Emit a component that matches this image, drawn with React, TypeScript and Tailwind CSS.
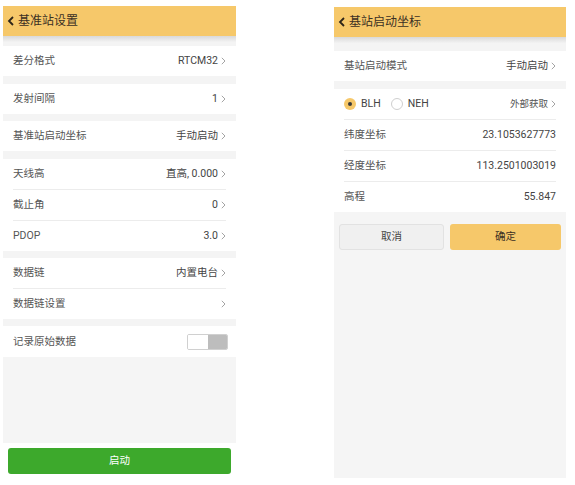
import React from "react";

const font = { fontFamily: 'Roboto, "Noto Sans CJK SC", sans-serif' };

function Chevron() {
  return (
    <svg width="5" height="8" viewBox="0 0 5 8" className="ml-[3px] shrink-0">
      <polyline points="0.8,0.8 4,4 0.8,7.2" fill="none" stroke="#9a9a9a" strokeWidth="0.9" />
    </svg>
  );
}

function Header({ title }: { title: string }) {
  return (
    <>
      <div className="flex h-[30px] items-center bg-[#f6c86a] pl-[4px] text-[12px] text-[#3b3024]">
        <svg width="8" height="10" viewBox="0 0 8 10" className="mr-[3px]">
          <polyline points="6,1 2,5 6,9" fill="none" stroke="#2c2418" strokeWidth="1.8" />
        </svg>
        {title}
      </div>
      <div className="h-[6px] bg-gradient-to-b from-[#d9d9d9] to-[#f3f3f3]" />
    </>
  );
}

function Row({
  label,
  value,
  chevron = true,
  divider = false,
}: {
  label: string;
  value?: React.ReactNode;
  chevron?: boolean;
  divider?: boolean;
}) {
  return (
    <div className="bg-white px-[10px]">
      <div
        className={
          "flex items-center justify-between text-[10.5px] " +
          (divider ? "h-[31px] border-b border-[#ececec]" : "h-[30px]")
        }
      >
        <span className="text-[#555]">{label}</span>
        <span className="flex items-center text-[#444]">
          {value}
          {chevron && <Chevron />}
        </span>
      </div>
    </div>
  );
}

function Gap({ h }: { h: string }) {
  return <div className={h + " bg-[#f4f4f4]"} />;
}

function Radio({ on, label }: { on: boolean; label: string }) {
  return (
    <span className="flex items-center gap-[5px]">
      {on ? (
        <span className="flex h-[12px] w-[12px] items-center justify-center rounded-full bg-[#f6c86a]">
          <span className="h-[4px] w-[4px] rounded-full bg-[#3a3a3a]" />
        </span>
      ) : (
        <span className="h-[12px] w-[12px] rounded-full border border-[#cfcfcf] bg-white" />
      )}
      <span className="text-[10.5px] text-[#444]">{label}</span>
    </span>
  );
}

function BaseSettings() {
  return (
    <div className="flex h-[472px] w-[233px] flex-col bg-[#f4f4f4]">
      <Header title="基准站设置" />
      <Gap h="h-[4px]" />
      <Row label="差分格式" value="RTCM32" />
      <Gap h="h-[8px]" />
      <Row label="发射间隔" value="1" />
      <Gap h="h-[7px]" />
      <Row label="基准站启动坐标" value="手动启动" />
      <Gap h="h-[8px]" />
      <Row label="天线高" value="直高, 0.000" divider />
      <Row label="截止角" value="0" divider />
      <Row label="PDOP" value="3.0" />
      <Gap h="h-[7px]" />
      <Row label="数据链" value="内置电台" divider />
      <Row label="数据链设置" value="" />
      <Gap h="h-[7px]" />
      <div className="bg-white px-[10px]">
        <div className="flex h-[31px] items-center justify-between text-[10.5px]">
          <span className="text-[#555]">记录原始数据</span>
          <span className="mr-[-2px] flex h-[16px] w-[41px] overflow-hidden rounded-[2px] border border-[#d0d0d0]">
            <span className="flex-1 bg-white" />
            <span className="flex-1 bg-[#bdbdbd]" />
          </span>
        </div>
      </div>
      <div className="flex-1 bg-[#f5f5f5]" />
      <div className="bg-white px-[5px] pb-[4px] pt-[5px]">
        <div className="flex h-[26px] items-center justify-center rounded-[3px] bg-[#3da92c] text-[10.5px] text-white">
          启动
        </div>
      </div>
    </div>
  );
}

function StartCoords() {
  return (
    <div className="flex h-[471px] w-[232px] flex-col bg-[#f5f5f5]">
      <Header title="基站启动坐标" />
      <Gap h="h-[8px]" />
      <Row label="基站启动模式" value="手动启动" />
      <Gap h="h-[8px]" />
      <div className="bg-white px-[10px]">
        <div className="flex h-[31px] items-center justify-between border-b border-[#ececec]">
          <span className="flex items-center gap-[10px]">
            <Radio on label="BLH" />
            <Radio on={false} label="NEH" />
          </span>
          <span className="flex items-center text-[9.5px] text-[#555]">
            外部获取
            <Chevron />
          </span>
        </div>
      </div>
      <Row label="纬度坐标" value="23.1053627773" chevron={false} divider />
      <Row label="经度坐标" value="113.2501003019" chevron={false} divider />
      <Row label="高程" value="55.847" chevron={false} />
      <div className="flex gap-[6px] px-[5px] pt-[12px]">
        <div className="flex h-[26px] w-[105px] items-center justify-center rounded-[3px] border border-[#e2e2e2] bg-[#f0f0f0] text-[10.5px] text-[#444]">
          取消
        </div>
        <div className="flex h-[26px] flex-1 items-center justify-center rounded-[3px] bg-[#f6c86a] text-[10.5px] text-[#3b3024]">
          确定
        </div>
      </div>
      <div className="flex-1" />
    </div>
  );
}

export default function App() {
  return (
    <div className="flex h-[485px] w-[575px] bg-white" style={font}>
      <div className="ml-[3px] mt-[6px]">
        <BaseSettings />
      </div>
      <div className="ml-[98px] mt-[7px]">
        <StartCoords />
      </div>
    </div>
  );
}
